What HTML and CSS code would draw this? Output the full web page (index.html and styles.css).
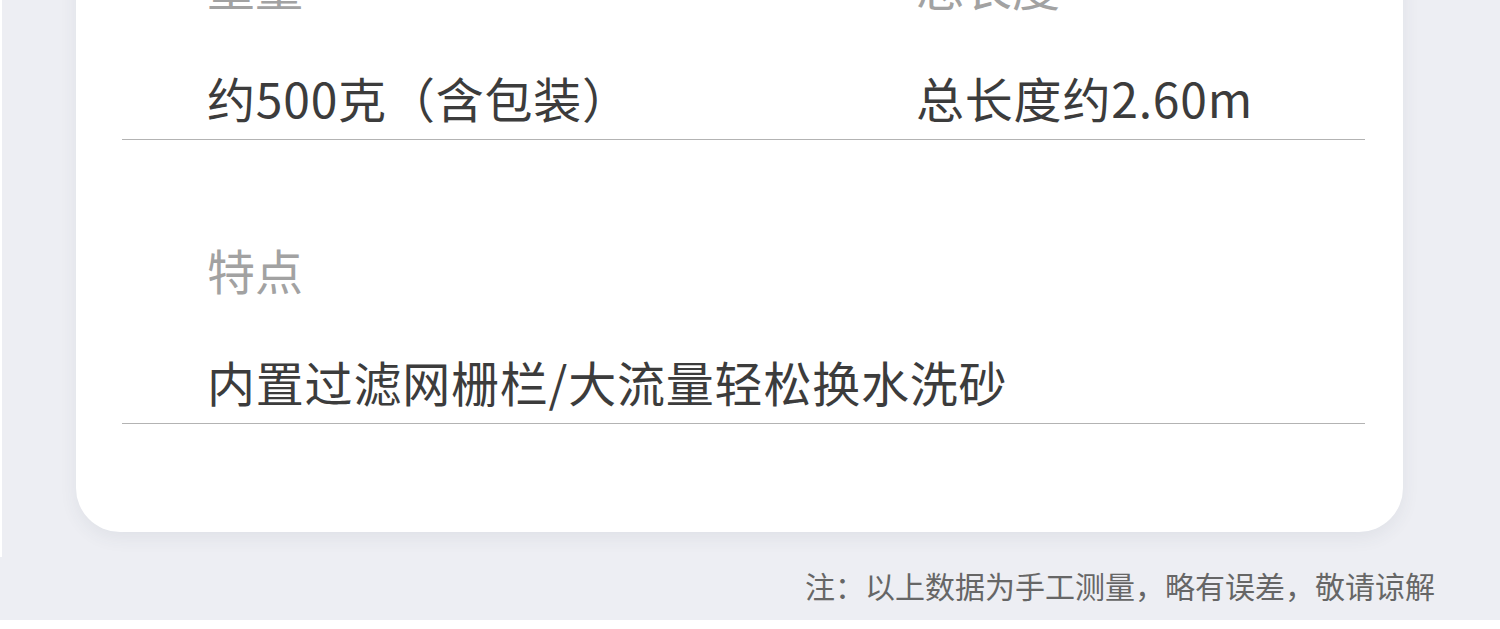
FILE: index.html
```html
<!DOCTYPE html>
<html lang="zh-CN">
<head>
<meta charset="utf-8">
<title>参数</title>
<link rel="stylesheet" href="styles.css">
</head>
<body>
<div class="page">
  <div class="card">
    <div class="row">
      <div class="cells">
        <div class="cell">
          <div class="label">重量</div>
          <div class="value">约500克（含包装）</div>
        </div>
        <div class="cell">
          <div class="label">总长度</div>
          <div class="value">总长度约2.60m</div>
        </div>
      </div>
    </div>
    <div class="row">
      <div class="cells">
        <div class="cell wide">
          <div class="label">特点</div>
          <div class="value">内置过滤网栅栏/大流量轻松换水洗砂</div>
        </div>
      </div>
    </div>
  </div>
</div>
<div class="foot">注：以上数据为手工测量，略有误差，敬请谅解</div>
</body>
</html>
```

FILE: styles.css
```css
html, body {
  margin: 0;
  padding: 0;
  background: #ffffff;
  font-family: "Noto Sans CJK SC", "Noto Sans", sans-serif;
}
.page {
  margin-left: 2px;
  height: 557px;
  background: #edeef3;
  padding: 0 97px 0 74px;
  overflow: hidden;
}
.card {
  margin-top: -145px;
  background: #ffffff;
  border-radius: 44px;
  padding-bottom: 108px;
  box-shadow: 0 6px 18px rgba(60, 64, 90, 0.07);
}
.row {
  padding: 106px 38px 0 46px;
}
.row + .row {
  padding-top: 105px;
}
.cells {
  display: grid;
  grid-template-columns: 709px 1fr;
  padding: 0 0 18px 85px;
  border-bottom: 1px solid #b3b3b3;
}
.cell.wide {
  grid-column: 1 / -1;
}
.label {
  font-size: 48px;
  line-height: 48px;
  color: #a2a2a2;
}
.value {
  margin-top: 64px;
  font-size: 48px;
  line-height: 48px;
  letter-spacing: 0.8px;
  color: #3c3c3c;
}
.foot {
  height: 63px;
  background: #edeef3;
  text-align: right;
  padding-right: 65px;
  font-size: 30px;
  line-height: 30px;
  padding-top: 13px;
  box-sizing: border-box;
  color: #666666;
}
```
